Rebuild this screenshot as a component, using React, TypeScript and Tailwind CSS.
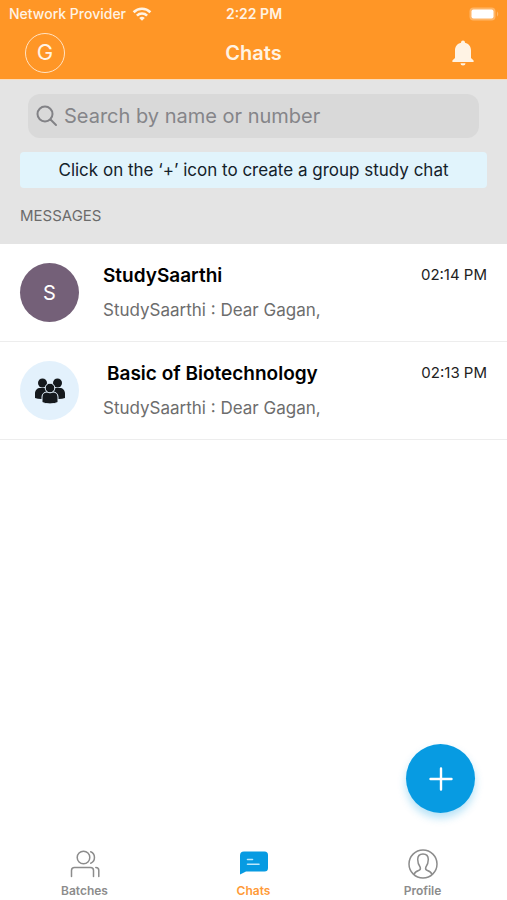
import type { ReactNode } from "react";

type Chat = {
  title: string;
  preview: string;
  time: string;
  avatar: ReactNode;
  avatarClass: string;
  titleClass?: string;
};

function WifiIcon() {
  return (
    <svg viewBox="0 0 20 14" className="h-3.5 w-5" fill="none" stroke="currentColor" strokeWidth="2.6" aria-hidden="true">
      <path d="M1.6 5.2a12 12 0 0 1 16.8 0" />
      <path d="M4.9 8.6a7.3 7.3 0 0 1 10.2 0" />
      <path d="M7.2 11a4 4 0 0 1 5.6 0L10 13.8z" fill="currentColor" stroke="none" />
    </svg>
  );
}

function BatteryIcon() {
  return (
    <svg viewBox="0 0 30 14" className="h-3.5 w-[30px]" aria-hidden="true">
      <rect x="0.5" y="0.5" width="26" height="13" rx="4" fill="#ffb566" />
      <rect x="2.5" y="2.5" width="22" height="9" rx="2" fill="#fff" />
      <path d="M28 4.5c1.6.8 1.6 4.2 0 5z" fill="#ffb566" />
    </svg>
  );
}

function BellIcon() {
  return (
    <svg viewBox="0 0 24 28" className="h-7 w-6" fill="#fff3e4" aria-hidden="true">
      <path d="M12 1.500a2 2 0 0 0-2 2v.3C6.200 4.600 4 7.600 4 11.500V19L1.400 21.600V23h21.200v-1.400L20 19v-7.500c0-3.900-2.200-6.900-6-7.700v-.3a2 2 0 0 0-2-2z" />
      <path d="M9.500 24.200h5a2.500 2.300 0 0 1-5 0z" />
    </svg>
  );
}

function SearchIcon() {
  return (
    <svg viewBox="0 0 22 22" className="h-[22px] w-[22px] shrink-0" fill="none" stroke="#828286" strokeWidth="2" strokeLinecap="round" aria-hidden="true">
      <circle cx="9" cy="9" r="7.500" />
      <path d="m14.500 14.500 5.500 5.500" />
    </svg>
  );
}

function GroupIcon() {
  return (
    <svg viewBox="0 0 32 28" className="h-7 w-8" fill="#15191d" aria-hidden="true">
      <circle cx="8.500" cy="6" r="4.500" />
      <circle cx="23.500" cy="6" r="4.500" />
      <path d="M1 21v-4.500C1 13 3.500 11 6 11h6v10.500c-4 .8-8 .6-11-.5zM31 21v-4.500c0-3.500-2.500-5.500-5-5.500h-6v10.500c4 .8 8 .6 11-.5z" />
      <g stroke="#e3f1fc" strokeWidth="1">
        <path d="M8 25.500V20c0-3.200 2.200-5 5-5h6c2.800 0 5 1.800 5 5v5.500c-4.500 1.900-11.500 1.900-16 0z" />
        <circle cx="16" cy="11" r="4.800" />
      </g>
    </svg>
  );
}

function BatchesIcon() {
  return (
    <svg viewBox="0 0 30 28" className="h-7 w-[30px]" fill="none" stroke="currentColor" strokeWidth="1.500" strokeLinecap="round" aria-hidden="true">
      <circle cx="13.500" cy="7.500" r="6.300" />
      <path d="M20.700 1.800c5 2 5 9.400 0 11.400" />
      <path d="M1.500 26.500v-6c0-2 1-3 3-3h16c2 0 3 1 3 3v6" />
      <path d="M25.800 17.500c2 0 3 1 3 3v6" />
    </svg>
  );
}

function ChatsIcon() {
  return (
    <svg viewBox="0 0 30 28" className="h-7 w-[30px]" aria-hidden="true">
      <path d="M5 1.500h20.500a3.500 3.500 0 0 1 3.500 3.500v13a3.500 3.500 0 0 1-3.500 3.500H7L1 24.500V5.500a4 4 0 0 1 4-4z" fill="#079be2" />
      <path d="M8.500 9.500h5M8.500 14.300h11.500" stroke="#bde8fb" strokeWidth="1.600" strokeLinecap="round" />
    </svg>
  );
}

function ProfileIcon() {
  return (
    <svg viewBox="0 0 30 30" className="h-[30px] w-[30px]" fill="none" stroke="currentColor" strokeWidth="1.500" strokeLinejoin="round" aria-hidden="true">
      <circle cx="15" cy="15" r="14" />
      <path d="M6 25.500c.8-2.600 2.600-3.300 4.600-4 1.700-.6 2.100-1.800 1.600-3.300C10.500 16 9.700 13.500 9.700 10.500 9.700 7 11.500 5 15 5s5.300 2 5.300 5.500c0 3-.8 5.500-2.500 7.700-.5 1.500-.1 2.700 1.600 3.300 2 .7 3.800 1.400 4.600 4" />
    </svg>
  );
}

const chats: Chat[] = [
  {
    title: "StudySaarthi",
    preview: "StudySaarthi : Dear Gagan,",
    time: "02:14 PM",
    avatar: "S",
    avatarClass: "bg-[#746078]",
  },
  {
    title: "Basic of Biotechnology",
    preview: "StudySaarthi : Dear Gagan,",
    time: "02:13 PM",
    avatar: <GroupIcon />,
    avatarClass: "bg-[#e3f1fc]",
    titleClass: "pl-1",
  },
];

const tabs = [
  { label: "Batches", icon: <BatchesIcon />, active: false },
  { label: "Chats", icon: <ChatsIcon />, active: true },
  { label: "Profile", icon: <ProfileIcon />, active: false },
];

function ChatRow({ chat }: { chat: Chat }) {
  return (
    <li className="border-b border-[#ededed]">
      <a href="#chat" className="flex h-[97px] items-center gap-6 pr-5 pl-5">
        <span className={`flex size-[59px] shrink-0 items-center justify-center rounded-full text-xl text-white ${chat.avatarClass}`}>
          {chat.avatar}
        </span>
        <span className="flex min-w-0 flex-1 flex-col gap-2 pb-0.5">
          <span className="flex items-center justify-between">
            <span className={`truncate text-[19px] leading-7 font-semibold text-black ${chat.titleClass ?? ""}`}>{chat.title}</span>
            <span className="shrink-0 text-[15px] text-[#222]">{chat.time}</span>
          </span>
          <span className="truncate text-[17px] leading-6 text-[#6d6d6d]">{chat.preview}</span>
        </span>
      </a>
    </li>
  );
}

export default function App() {
  return (
    <div className="relative flex min-h-screen flex-col bg-white font-['Inter',sans-serif]">
      <header className="border-b border-[#fbdcbb] bg-[#ff9626] text-[#fff3e4]">
        <div className="grid h-7 grid-cols-3 items-center pr-2 pl-[9px] text-sm">
          <div className="flex items-center gap-1.5 font-medium whitespace-nowrap">
            <span>Network Provider</span>
            <WifiIcon />
          </div>
          <span className="text-center font-semibold">2:22 PM</span>
          <div className="flex justify-end">
            <BatteryIcon />
          </div>
        </div>
        <div className="grid h-[51px] grid-cols-3 items-center px-[25px] pb-0.5">
          <button type="button" aria-label="Account" className="flex size-10 items-center justify-center rounded-full border border-[#ffe3c4] text-[22px]">
            G
          </button>
          <h1 className="text-center text-xl font-semibold">Chats</h1>
          <button type="button" aria-label="Notifications" className="mr-[7px] justify-self-end">
            <BellIcon />
          </button>
        </div>
      </header>

      <section className="bg-[#e4e4e4] px-5 pt-3.5 pb-4">
        <label className="mx-2 flex h-11 items-center gap-1.5 rounded-xl bg-[#d9d9d9] px-2">
          <SearchIcon />
          <input
            type="search"
            aria-label="Search by name or number"
            placeholder="Search by name or number"
            className="min-w-0 flex-1 bg-transparent text-xl outline-none placeholder:text-[#858589]"
          />
        </label>
        <p className="mt-3.5 rounded-sm bg-[#e1f4fc] py-1.5 text-center text-[17px] leading-6 text-[#14212a]">
          Click on the ‘+’ icon to create a group study chat
        </p>
        <h2 className="mt-4 text-[15px] leading-6 text-[#6b6b6b]">MESSAGES</h2>
      </section>

      <main className="flex-1">
        <ul>
          {chats.map((chat) => (
            <ChatRow key={chat.title} chat={chat} />
          ))}
        </ul>
      </main>

      <button
        type="button"
        aria-label="Create group chat"
        className="absolute right-8 bottom-[87px] flex size-[69px] items-center justify-center rounded-full bg-[#079be2] text-white shadow-[0_5px_9px_rgba(7,155,226,0.3)]"
      >
        <svg viewBox="0 0 24 24" className="size-6" stroke="currentColor" strokeWidth="2.400" strokeLinecap="round" aria-hidden="true">
          <path d="M12 1.500v21M1.500 12h21" />
        </svg>
      </button>

      <nav className="grid h-[54px] grid-cols-3">
        {tabs.map((tab) => (
          <a
            key={tab.label}
            href={`#${tab.label.toLowerCase()}`}
            aria-current={tab.active ? "page" : undefined}
            className={`flex flex-col items-center gap-px text-xs font-semibold ${tab.active ? "text-[#ff9b38]" : "text-[#8c8c8c]"}`}
          >
            <span className="flex h-9 items-center">{tab.icon}</span>
            {tab.label}
          </a>
        ))}
      </nav>
    </div>
  );
}
